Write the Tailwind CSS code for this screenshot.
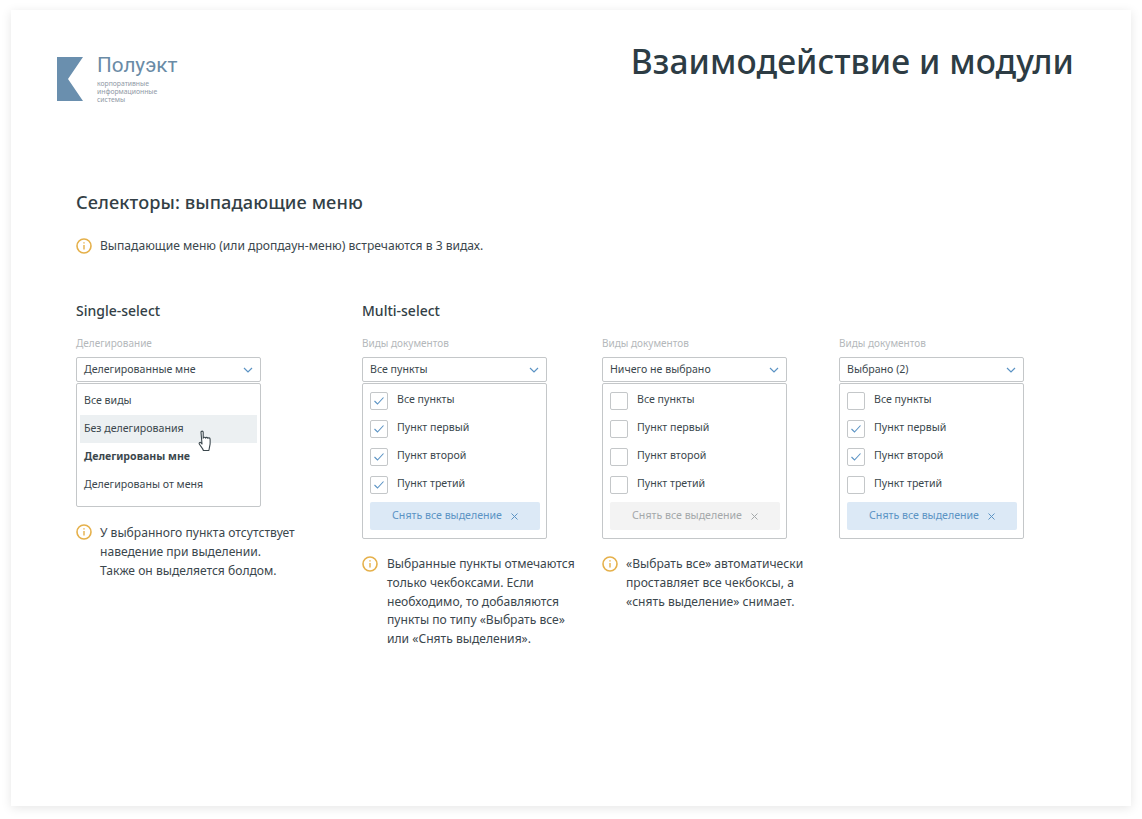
<!DOCTYPE html>
<html lang="ru">
<head>
  <meta charset="UTF-8">
  <title>Взаимодействие и модули</title>
  <script src="https://cdn.jsdelivr.net/npm/@tailwindcss/browser@4"></script>
</head>
<body class="bg-white h-[819px] overflow-hidden font-['Noto_Sans',sans-serif] text-[#3b474d]">
  <div class="mx-[11px] mt-[10px] h-[796px] bg-white shadow-[0_2px_10px_rgba(0,0,0,0.1)] pl-[65px] pr-[57px]">

    <!-- header -->
    <header class="flex justify-between h-[176px]">
      <div class="flex ml-[-19px] mt-[47px] h-[44px]">
        <svg class="w-[26px] h-[44px]" viewBox="0 0 26 44"><polygon points="0,0 26,0 11,22 26,44 0,44" fill="#6a8fae"/></svg>
        <div class="ml-[14px]">
          <div class="font-['Roboto',sans-serif] text-[20.7px] leading-[22px] text-[#6a8ba6] mt-[-3px]">Полуэкт</div>
          <div class="text-[6.8px] leading-[8px] text-[#8f99a5] mt-[4px]">корпоративные<br>информационные<br>системы</div>
        </div>
      </div>
      <h1 class="mt-[30px] text-[33.5px] leading-[42px] font-medium text-[#2d3c44] tracking-[0.1px]">Взаимодействие и модули</h1>
    </header>

    <h2 class="text-[18.2px] leading-[24px] font-medium text-[#333f46] tracking-[0.1px] mt-[4px]">Селекторы: выпадающие меню</h2>

    <div class="flex items-center gap-[8px] mt-[22px] text-[12.1px] leading-[19px]">
      <svg class="w-[16px] h-[16px] shrink-0" viewBox="0 0 16 16" fill="none" stroke="#e5b04a"><circle cx="8" cy="8" r="7" stroke-width="1.6"/><path d="M8 7v4.5M8 4.2v1.4" stroke-width="1.4"/></svg>
      <p>Выпадающие меню (или дропдаун-меню) встречаются в 3 видах.</p>
    </div>

    <div class="flex mt-[46px]">
      <!-- single select -->
      <section class="w-[286px] shrink-0">
        <h3 class="text-[14px] leading-[20px] font-medium text-[#333f46]">Single-select</h3>
        <div class="text-[10px] leading-[14px] text-[#b4b8bb] mt-[15px]">Делегирование</div>
        <div class="w-[185px] h-[25px] mt-[7px] border border-[#c4c7c9] rounded-[2px] flex items-center justify-between pl-[7px] pr-[7px] text-[10.6px]">
          <span>Делегированные мне</span>
          <svg class="w-[10px] h-[6px]" viewBox="0 0 10 6" fill="none" stroke="#5b93c4" stroke-width="1.2"><path d="M1 1l4 4 4-4"/></svg>
        </div>
        <ul class="relative w-[185px] h-[124px] mt-[1px] border border-[#c4c7c9] rounded-[2px] px-[3px] pt-[3px] text-[10.6px]">
          <li class="h-[28px] flex items-center pl-[4px]">Все виды</li>
          <li class="h-[28px] flex items-center pl-[4px] bg-[#ecf0f2]">Без делегирования</li>
          <li class="h-[28px] flex items-center pl-[4px] font-bold">Делегированы мне</li>
          <li class="h-[28px] flex items-center pl-[4px]">Делегированы от меня</li>
          <svg class="absolute left-[120px] top-[46px] w-[17px] h-[22px]" viewBox="0 0 17 22" fill="#fff" stroke="#3b474d" stroke-width="1.1" stroke-linejoin="round"><path d="M4 2.2c0-1.5 2.2-1.5 2.2 0v6c.3-1.3 2.2-1.3 2.4 0 .3-1.1 2.1-1.1 2.3.2.4-.9 2.1-.8 2.2.6 0 2.5.4 5-.4 7.2l-.8 4.3H6.4c-.6-2-2-3.3-4-6.2-.9-1.3.6-2.7 1.7-1.5L5 14 4 2.2z"/></svg>
        </ul>
        <div class="flex gap-[8px] mt-[16px] text-[12.1px] leading-[19px]">
          <svg class="w-[16px] h-[16px] shrink-0 mt-[1px]" viewBox="0 0 16 16" fill="none" stroke="#e5b04a"><circle cx="8" cy="8" r="7" stroke-width="1.6"/><path d="M8 7v4.5M8 4.2v1.4" stroke-width="1.4"/></svg>
          <p class="whitespace-nowrap">У выбранного пункта отсутствует<br>наведение при выделении.<br>Также он выделяется болдом.</p>
        </div>
      </section>

      <!-- multi select -->
      <section>
        <h3 class="text-[14px] leading-[20px] font-medium text-[#333f46]">Multi-select</h3>
        <div class="flex mt-[15px]">

          <div class="w-[240px] shrink-0">
            <div class="text-[10px] leading-[14px] text-[#b4b8bb]">Виды документов</div>
            <div class="w-[185px] h-[25px] mt-[7px] border border-[#c4c7c9] rounded-[2px] flex items-center justify-between px-[7px] text-[10.6px]">
              <span>Все пункты</span>
              <svg class="w-[10px] h-[6px]" viewBox="0 0 10 6" fill="none" stroke="#5b93c4" stroke-width="1.2"><path d="M1 1l4 4 4-4"/></svg>
            </div>
            <div class="w-[185px] h-[156px] mt-[1px] border border-[#c4c7c9] rounded-[2px] pl-[7px] pt-[3px] text-[10.6px]">
              <div class="h-[28px] flex items-center gap-[9px]"><span class="w-[18px] h-[18px] border border-[#c4c7c9] rounded-[2px] flex items-center justify-center"><svg class="w-[10px] h-[8px]" viewBox="0 0 10 8" fill="none" stroke="#5b93c4" stroke-width="1.1"><path d="M.5 4l3 3 6-6.5"/></svg></span><span class="mt-[-2px]">Все пункты</span></div>
              <div class="h-[28px] flex items-center gap-[9px]"><span class="w-[18px] h-[18px] border border-[#c4c7c9] rounded-[2px] flex items-center justify-center"><svg class="w-[10px] h-[8px]" viewBox="0 0 10 8" fill="none" stroke="#5b93c4" stroke-width="1.1"><path d="M.5 4l3 3 6-6.5"/></svg></span><span class="mt-[-2px]">Пункт первый</span></div>
              <div class="h-[28px] flex items-center gap-[9px]"><span class="w-[18px] h-[18px] border border-[#c4c7c9] rounded-[2px] flex items-center justify-center"><svg class="w-[10px] h-[8px]" viewBox="0 0 10 8" fill="none" stroke="#5b93c4" stroke-width="1.1"><path d="M.5 4l3 3 6-6.5"/></svg></span><span class="mt-[-2px]">Пункт второй</span></div>
              <div class="h-[28px] flex items-center gap-[9px]"><span class="w-[18px] h-[18px] border border-[#c4c7c9] rounded-[2px] flex items-center justify-center"><svg class="w-[10px] h-[8px]" viewBox="0 0 10 8" fill="none" stroke="#5b93c4" stroke-width="1.1"><path d="M.5 4l3 3 6-6.5"/></svg></span><span class="mt-[-2px]">Пункт третий</span></div>
              <div class="w-[170px] h-[28px] mt-[3px] bg-[#dce9f6] rounded-[2px] flex items-center justify-center gap-[9px] text-[#5b93c4]">Снять все выделение <svg class="w-[7px] h-[7px]" viewBox="0 0 7 7" stroke="currentColor"><path d="M.5.5l6 6M6.5.5l-6 6"/></svg></div>
            </div>
            <div class="flex gap-[9px] mt-[16px] text-[12.1px] leading-[18.8px]">
              <svg class="w-[16px] h-[16px] shrink-0 mt-[1px]" viewBox="0 0 16 16" fill="none" stroke="#e5b04a"><circle cx="8" cy="8" r="7" stroke-width="1.6"/><path d="M8 7v4.5M8 4.2v1.4" stroke-width="1.4"/></svg>
              <p class="whitespace-nowrap">Выбранные пункты отмечаются<br>только чекбоксами. Если<br>необходимо, то добавляются<br>пункты по типу «Выбрать все»<br>или «Снять выделения».</p>
            </div>
          </div>

          <div class="w-[237px] shrink-0">
            <div class="text-[10px] leading-[14px] text-[#b4b8bb]">Виды документов</div>
            <div class="w-[185px] h-[25px] mt-[7px] border border-[#c4c7c9] rounded-[2px] flex items-center justify-between px-[7px] text-[10.6px]">
              <span>Ничего не выбрано</span>
              <svg class="w-[10px] h-[6px]" viewBox="0 0 10 6" fill="none" stroke="#5b93c4" stroke-width="1.2"><path d="M1 1l4 4 4-4"/></svg>
            </div>
            <div class="w-[185px] h-[156px] mt-[1px] border border-[#c4c7c9] rounded-[2px] pl-[7px] pt-[3px] text-[10.6px]">
              <div class="h-[28px] flex items-center gap-[9px]"><span class="w-[18px] h-[18px] border border-[#c4c7c9] rounded-[2px]"></span><span class="mt-[-2px]">Все пункты</span></div>
              <div class="h-[28px] flex items-center gap-[9px]"><span class="w-[18px] h-[18px] border border-[#c4c7c9] rounded-[2px]"></span><span class="mt-[-2px]">Пункт первый</span></div>
              <div class="h-[28px] flex items-center gap-[9px]"><span class="w-[18px] h-[18px] border border-[#c4c7c9] rounded-[2px]"></span><span class="mt-[-2px]">Пункт второй</span></div>
              <div class="h-[28px] flex items-center gap-[9px]"><span class="w-[18px] h-[18px] border border-[#c4c7c9] rounded-[2px]"></span><span class="mt-[-2px]">Пункт третий</span></div>
              <div class="w-[170px] h-[28px] mt-[3px] bg-[#f3f3f3] rounded-[2px] flex items-center justify-center gap-[9px] text-[#a4a8aa]">Снять все выделение <svg class="w-[7px] h-[7px]" viewBox="0 0 7 7" stroke="currentColor"><path d="M.5.5l6 6M6.5.5l-6 6"/></svg></div>
            </div>
            <div class="flex gap-[8px] mt-[16px] text-[12.1px] leading-[18.8px]">
              <svg class="w-[16px] h-[16px] shrink-0 mt-[1px]" viewBox="0 0 16 16" fill="none" stroke="#e5b04a"><circle cx="8" cy="8" r="7" stroke-width="1.6"/><path d="M8 7v4.5M8 4.2v1.4" stroke-width="1.4"/></svg>
              <p class="whitespace-nowrap">«Выбрать все» автоматически<br>проставляет все чекбоксы, а<br>«снять выделение» снимает.</p>
            </div>
          </div>

          <div class="w-[185px] shrink-0">
            <div class="text-[10px] leading-[14px] text-[#b4b8bb]">Виды документов</div>
            <div class="w-[185px] h-[25px] mt-[7px] border border-[#c4c7c9] rounded-[2px] flex items-center justify-between px-[7px] text-[10.6px]">
              <span>Выбрано (2)</span>
              <svg class="w-[10px] h-[6px]" viewBox="0 0 10 6" fill="none" stroke="#5b93c4" stroke-width="1.2"><path d="M1 1l4 4 4-4"/></svg>
            </div>
            <div class="w-[185px] h-[156px] mt-[1px] border border-[#c4c7c9] rounded-[2px] pl-[7px] pt-[3px] text-[10.6px]">
              <div class="h-[28px] flex items-center gap-[9px]"><span class="w-[18px] h-[18px] border border-[#c4c7c9] rounded-[2px]"></span><span class="mt-[-2px]">Все пункты</span></div>
              <div class="h-[28px] flex items-center gap-[9px]"><span class="w-[18px] h-[18px] border border-[#c4c7c9] rounded-[2px] flex items-center justify-center"><svg class="w-[10px] h-[8px]" viewBox="0 0 10 8" fill="none" stroke="#5b93c4" stroke-width="1.1"><path d="M.5 4l3 3 6-6.5"/></svg></span><span class="mt-[-2px]">Пункт первый</span></div>
              <div class="h-[28px] flex items-center gap-[9px]"><span class="w-[18px] h-[18px] border border-[#c4c7c9] rounded-[2px] flex items-center justify-center"><svg class="w-[10px] h-[8px]" viewBox="0 0 10 8" fill="none" stroke="#5b93c4" stroke-width="1.1"><path d="M.5 4l3 3 6-6.5"/></svg></span><span class="mt-[-2px]">Пункт второй</span></div>
              <div class="h-[28px] flex items-center gap-[9px]"><span class="w-[18px] h-[18px] border border-[#c4c7c9] rounded-[2px]"></span><span class="mt-[-2px]">Пункт третий</span></div>
              <div class="w-[170px] h-[28px] mt-[3px] bg-[#dce9f6] rounded-[2px] flex items-center justify-center gap-[9px] text-[#5b93c4]">Снять все выделение <svg class="w-[7px] h-[7px]" viewBox="0 0 7 7" stroke="currentColor"><path d="M.5.5l6 6M6.5.5l-6 6"/></svg></div>
            </div>
          </div>

        </div>
      </section>
    </div>
  </div>
</body>
</html>
